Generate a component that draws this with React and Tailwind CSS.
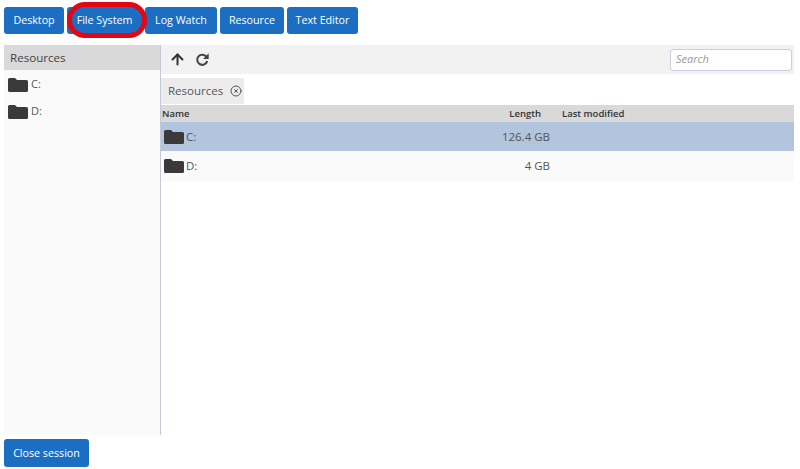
import React from "react";
import { ArrowUp, CircleX } from "lucide-react";

const Folder = () => (
  <svg viewBox="0 0 20 14" className="w-5 h-[14px] shrink-0" fill="#3a3a3a">
    <path d="M1.5 0H7l2 2h9.5A1.5 1.5 0 0 1 20 3.5v9a1.5 1.5 0 0 1-1.5 1.5h-17A1.5 1.5 0 0 1 0 12.5v-11A1.5 1.5 0 0 1 1.5 0z" />
  </svg>
);

const Redo = () => (
  <svg viewBox="0 0 16 16" className="w-[15px] h-[15px] ml-[9px]" fill="none">
    <path d="M12.2 5.2A5.4 5.4 0 1 0 13 9.6" stroke="#444" strokeWidth="2.2" />
    <path d="M14.6 1.4V7.4H8.6z" fill="#444" />
  </svg>
);

const Btn = ({ children, className = "" }) => (
  <button className={"h-[27px] rounded-[3px] bg-[#1b6ec2] text-white text-[10.7px] leading-none flex items-center justify-center " + className}>
    {children}
  </button>
);

const Row = ({ name, len, sel }) => (
  <div className={"flex items-center text-[11.5px] text-[#555] " + (sel ? "h-[29px] bg-[#b3c4de]" : "h-[30px] bg-[#fafafa]")}>
    <div className="flex items-center gap-[2px] pl-[3px] w-[318px]">
      <Folder />
      <span>{name}</span>
    </div>
    <div className="w-[71px] text-right">{len}</div>
  </div>
);

export default function App() {
  return (
    <div className="relative w-[800px] h-[469px] bg-white overflow-hidden font-['Open_Sans',sans-serif]">
      <div className="flex gap-[3px] pl-1 pt-[7px] h-[45px] items-start">
        <Btn className="w-[60px]">Desktop</Btn>
        <Btn className="w-[75px]">File System</Btn>
        <Btn className="w-[72px]">Log Watch</Btn>
        <Btn className="w-[64px]">Resource</Btn>
        <Btn className="w-[71px]">Text Editor</Btn>
      </div>
      <div className="absolute left-[67px] top-[2px] w-[80px] h-[36px] rounded-[18px] border-[5px] border-[#e30613]" />
      <div className="flex h-[390px] ml-1 mr-[6px]">
        <div className="w-[157px] shrink-0 bg-[#fafafa] border-r border-[#c3c9d6] flex flex-col">
          <div className="h-[25px] bg-[#d9d9d9] text-[#444] text-[11.6px] flex items-center pl-[6px]">Resources</div>
          <div className="h-[27px] mt-[1px] flex items-center gap-[3px] pl-1 text-[11px] text-[#555]"><Folder /><span>C:</span></div>
          <div className="h-[27px] flex items-center gap-[3px] pl-1 text-[11px] text-[#555]"><Folder /><span>D:</span></div>
        </div>
        <div className="flex-1 flex flex-col min-w-0">
          <div className="h-[29px] bg-[#f2f2f2] flex items-center pl-[8px] pr-[2px]">
            <ArrowUp size={17} strokeWidth={2.8} color="#333" />
            <Redo />
            <div className="ml-auto w-[122px] h-[22px] rounded-[3px] border border-[#c9d0de] bg-white text-[11px] italic text-[#999] flex items-center pl-[5px]">Search</div>
          </div>
          <div className="h-[26px] mt-[4px] flex items-stretch">
            <div className="w-[83px] bg-[#ececec] flex items-center pl-[7px] text-[11.5px] text-[#555]">
              <span>Resources</span>
              <CircleX size={12} strokeWidth={1.8} color="#444" className="ml-[7px]" />
            </div>
          </div>
          <div className="h-[17px] bg-[#d9d9d9] flex items-center text-[9.5px] font-semibold text-[#333] leading-none mt-[1px]">
            <div className="w-[380px] flex justify-between pl-[1px]"><span>Name</span><span>Length</span></div>
            <div className="pl-[21px]">Last modified</div>
          </div>
          <Row name="C:" len="126.4 GB" sel />
          <Row name="D:" len="4 GB" />
        </div>
      </div>
      <div className="pl-1 pt-1">
        <Btn className="w-[85px] !h-[28px]">Close session</Btn>
      </div>
    </div>
  );
}
